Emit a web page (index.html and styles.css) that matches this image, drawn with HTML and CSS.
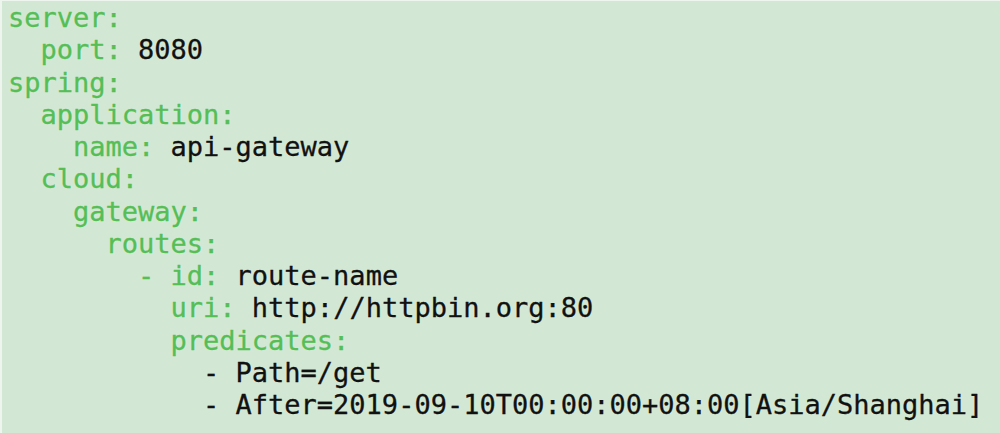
FILE: index.html
```html
<!DOCTYPE html>
<html>
<head>
<meta charset="utf-8">
<link rel="stylesheet" href="styles.css">
</head>
<body>
<div class="frame">
<pre class="code"><span class="k">server:</span>
  <span class="k">port:</span> 8080
<span class="k">spring:</span>
  <span class="k">application:</span>
    <span class="k">name:</span> api-gateway
  <span class="k">cloud:</span>
    <span class="k">gateway:</span>
      <span class="k">routes:</span>
        <span class="k">- id:</span> route-name
          <span class="k">uri:</span> http://httpbin.org:80
          <span class="k">predicates:</span>
            - Path=/get
            - After=2019-09-10T00:00:00+08:00[Asia/Shanghai]</pre>
</div>
</body>
</html>
```
FILE: styles.css
```css
html, body {
  margin: 0;
  padding: 0;
  background: #d3e8d4;
}
.frame {
  width: 1000px;
  height: 433px;
  box-sizing: border-box;
  border-top: 1px solid #eef5ee;
  border-left: 2px solid #eef5ee;
  background: #d3e8d4;
  overflow: hidden;
}
.code {
  margin: 0;
  padding: 1px 0 0 6px;
  font-family: "DejaVu Sans Mono", monospace;
  font-size: 27px;
  line-height: 32.25px;
  color: #111111;
  -webkit-text-stroke: 0.3px currentColor;
}
.k {
  color: #55be55;
}
```
